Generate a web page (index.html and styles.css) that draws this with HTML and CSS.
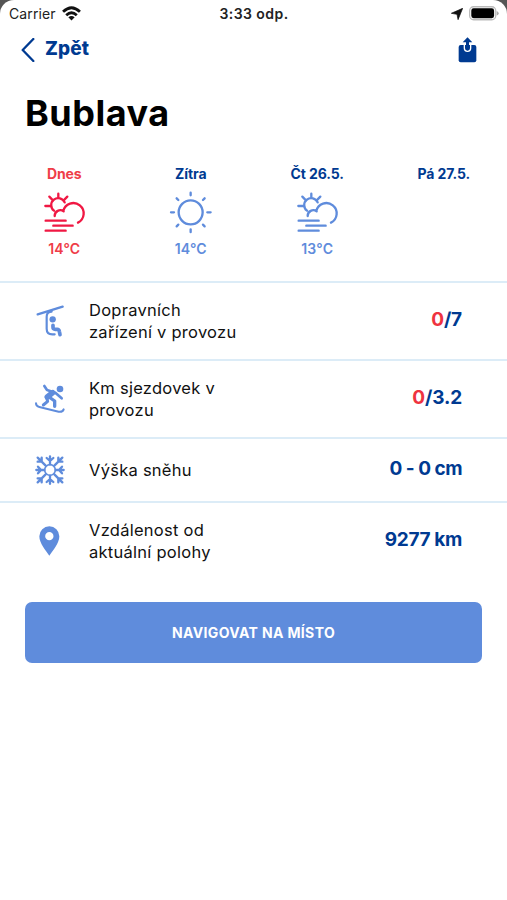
FILE: index.html
```html
<!DOCTYPE html>
<html lang="cs">
<head>
<meta charset="utf-8">
<title>Bublava</title>
<link rel="stylesheet" href="styles.css">
</head>
<body>
<main class="screen">
  <div class="status">
    <div class="status-left">
      <span class="carrier">Carrier</span>
      <svg class="wifi" viewBox="0 0 54 42"><g fill="none" stroke="#111" stroke-width="8"><path d="M3 16Q27-7 51 16"/><path d="M12 26Q27 12 42 26"/></g><path d="M18 32q9-8 18 0l-9 9z" fill="#111"/></svg>
    </div>
    <span class="clock">3:33 odp.</span>
    <div class="status-right">
      <svg class="location" viewBox="0 0 34 34"><path d="M33 1 20 33 17 18 1 15z" fill="#111" stroke="#111" stroke-width="2"/></svg>
      <svg class="battery" viewBox="0 0 92 44"><rect x="2" y="2" width="80" height="40" rx="12" fill="#fff" stroke="#bbb" stroke-width="4"/><rect x="7" y="7" width="70" height="30" rx="7" fill="#000"/><path d="M85 15q6 2 6 7t-6 7z" fill="#aaa"/></svg>
    </div>
  </div>
  <nav class="nav">
    <a class="back"><svg class="chevron" viewBox="0 0 42 72"><path d="M37 3 5 36 37 69" fill="none" stroke="#003a91" stroke-width="7" stroke-linecap="round" stroke-linejoin="round"/></svg><span class="back-text">Zpět</span></a>
    <svg class="share" viewBox="0 0 57 78"><path d="M8 24H49Q55 24 55 30V70Q55 76 49 76H8Q2 76 2 70V30Q2 24 8 24Z" fill="#003a91"/><path d="M19 22v12q0 9 9.500 9t9.500-9v-12" fill="none" stroke="#fff" stroke-width="4"/><path d="M23 22v-4h11v4z" fill="#fff"/><path d="M28.500 12V35" stroke="#003a91" stroke-width="9" stroke-linecap="round"/><path d="M28.500 1 43 16H14z" fill="#003a91"/></svg>
  </nav>
  <h1 class="title"><span>Bublava</span></h1>
  <section class="forecast">
    <div class="day today"><span class="day-name">Dnes</span>
      <svg class="weather" viewBox="65 105 130 135"><path d="M111 116v13M84 125l8 8M138 125l-8 8M72 153h16M98 167A21 21 0 1 1 130 142M100 183A17 17 0 0 1 127 169M126 168A31 31 0 1 1 170 203M73 197H133M96 212H154M73 227H133"/></svg>
      <span class="temp">14°C</span></div>
    <div class="day"><span class="day-name">Zítra</span>
      <svg class="weather" viewBox="447 105 130 135"><circle cx="512" cy="172" r="36"/><path d="M512 113v8M512 223v8M453 172h9M562 172h10M470 130l5 5M549 135l5-5M470 214l5-5M549 209l5 5"/></svg>
      <span class="temp">14°C</span></div>
    <div class="day"><span class="day-name">Čt 26.5.</span>
      <svg class="weather" viewBox="65 105 130 135"><path d="M111 116v13M84 125l8 8M138 125l-8 8M72 153h16M98 167A21 21 0 1 1 130 142M100 183A17 17 0 0 1 127 169M126 168A31 31 0 1 1 170 203M73 197H133M96 212H154M73 227H133"/></svg>
      <span class="temp">13°C</span></div>
    <div class="day"><span class="day-name">Pá 27.5.</span></div>
  </section>
  <section class="facts">
    <div class="fact">
      <svg class="fact-icon" viewBox="42 43 96 96"><g fill="none" stroke="#5f8cdc" stroke-linecap="round" stroke-linejoin="round"><path d="M53 71 128 48" stroke-width="7"/><path d="M95 63Q80 64 80 78V114Q80 131 97 131H104" stroke-width="6.500"/><path d="M99 104V110Q99 116 106 116H112Q117 116 118 122L120 132" stroke-width="11"/></g><circle cx="98" cy="86" r="9.500" fill="#5f8cdc"/></svg>
      <span class="label">Dopravních<br>zařízení v provozu</span>
      <span class="value v1"><b>0</b>/7</span>
    </div>
    <div class="fact">
      <svg class="fact-icon" viewBox="42 280 96 96"><g fill="none" stroke="#5f8cdc" stroke-linecap="round" stroke-linejoin="round"><path d="M48 341Q48 350 58 352L116 366Q128 368 131 359" stroke-width="6"/><path d="M73 289 81 301 106 309 125 326" stroke-width="8"/><path d="M98 309 82 322" stroke-width="17"/><path d="M80 325 83 335 70 346" stroke-width="9"/><path d="M87 322 104 334 104 350" stroke-width="10"/></g><circle cx="120" cy="298" r="10" fill="#5f8cdc"/></svg>
      <span class="label">Km sjezdovek v<br>provozu</span>
      <span class="value v2"><b>0</b>/3.2</span>
    </div>
    <div class="fact fact-short">
      <svg class="fact-icon" viewBox="42 42 96 96"><defs><g id="arm"><path d="M90 73V49M80 54 90 63 100 54"/></g></defs><g fill="none" stroke="#5f8cdc" stroke-width="7" stroke-linecap="round" stroke-linejoin="round"><circle cx="90" cy="90" r="16" stroke-width="5"/><use href="#arm"/><use href="#arm" transform="rotate(90 90 90)"/><use href="#arm" transform="rotate(180 90 90)"/><use href="#arm" transform="rotate(270 90 90)"/><path d="M103 77 127 53M115 53V65H127M103 103 127 127M115 127V115H127M77 103 53 127M65 127V115H53M77 77 53 53M65 53V65H53"/></g></svg>
      <span class="label">Výška sněhu</span>
      <span class="value v3">0 - 0 cm</span>
    </div>
    <div class="fact">
      <svg class="fact-icon" viewBox="42 254 96 96"><path fill="#5f8cdc" fill-rule="evenodd" d="M88 258A30 30 0 0 0 58 288C58 309 78 332 88 346C98 332 118 309 118 288A30 30 0 0 0 88 258ZM88 275A12.500 12.500 0 1 1 88 300A12.500 12.500 0 1 1 88 275Z"/></svg>
      <span class="label">Vzdálenost od<br>aktuální polohy</span>
      <span class="value v4">9277 km</span>
    </div>
  </section>
  <button class="navigate">NAVIGOVAT NA MÍSTO</button>
</main>
</body>
</html>
```
FILE: styles.css
```css
* { box-sizing: border-box; }
body { margin: 0; background: #555; font-family: Inter, sans-serif; }
.screen { height: 900px; background: #fff; border-radius: 14px 14px 0 0; overflow: hidden; }
svg { display: block; flex: none; }
.status { height: 27px; display: grid; grid-template-columns: 1fr auto 1fr; align-items: center; padding: 0 8px 0 9px; color: #222; }
.status-left, .status-right { display: flex; align-items: center; }
.status-left { gap: 6px; }
.status-right { justify-content: flex-end; gap: 6px; }
.carrier { font-size: 14px; letter-spacing: 0.1px; }
.clock { font-size: 14px; font-weight: 600; letter-spacing: 0.45px; }
.wifi { width: 19px; height: 15px; }
.location { width: 12px; height: 12px; }
.battery { width: 30px; height: 14.500px; }
.nav { height: 45px; display: flex; justify-content: space-between; align-items: center; padding: 0 30px 0 21px; }
.back { display: flex; align-items: center; gap: 10px; color: #003a91; font-size: 19px; font-weight: 800; }
.back-text { position: relative; top: -1px; letter-spacing: 0.15px; }
.chevron { width: 14px; height: 24px; }
.share { width: 19px; height: 26px; }
.title { margin: 0; height: 82px; display: flex; align-items: center; padding-left: 25px; font-size: 36px; font-weight: 700; letter-spacing: 0.5px; color: #000; }
.forecast { display: grid; grid-template-columns: repeat(4, 1fr); height: 127px; padding: 12px 0 0 1px; }
.day { display: flex; flex-direction: column; align-items: center; color: #5f8cdc; font-weight: 600; font-size: 14px; line-height: 16px; }
.day-name { color: #003a91; height: 24px; font-weight: 700; letter-spacing: -0.1px; }
.weather { width: 43.300px; height: 45px; fill: none; stroke: #5f8cdc; stroke-width: 7; stroke-linecap: round; }
.temp { margin-top: 6px; letter-spacing: 0.2px; }
.today, .today .day-name { color: #ef3d48; }
.today .weather { stroke: #f01843; }
.fact { height: 78px; border-top: 2px solid #dcecf7; display: flex; align-items: center; padding: 0 45px 0 34px; }
.fact-short { height: 64px; }
.fact-icon { width: 32px; height: 32px; }
.label { margin-left: 23px; flex: 1; font-size: 16.500px; letter-spacing: 0.26px; line-height: 22px; color: #111; }
.value { color: #003a91; font-size: 19px; font-weight: 700; padding-bottom: 3px; letter-spacing: -0.15px; }
.v3 { letter-spacing: -0.5px; }
.v4 { letter-spacing: -0.35px; }
.value b { color: #ef3340; font-weight: inherit; }
.navigate { display: block; width: 457px; height: 61px; margin: 23px 0 0 25px; border: 0; border-radius: 7px; background: #5f8cdc; color: #fff; font: 700 14px Inter, sans-serif; letter-spacing: 0.36px; }
```
